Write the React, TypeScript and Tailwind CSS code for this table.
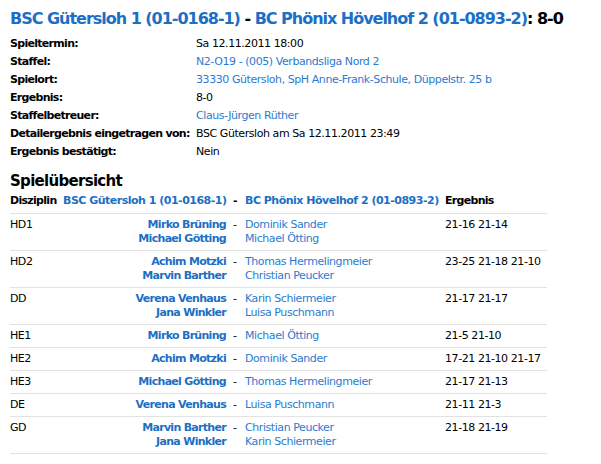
const info: [string, string, boolean][] = [
  ["Spieltermin:", "Sa 12.11.2011 18:00", false],
  ["Staffel:", "N2-O19 - (005) Verbandsliga Nord 2", true],
  ["Spielort:", "33330 Gütersloh, SpH Anne-Frank-Schule, Düppelstr. 25 b", true],
  ["Ergebnis:", "8-0", false],
  ["Staffelbetreuer:", "Claus-Jürgen Rüther", true],
  ["Detailergebnis eingetragen von:", "BSC Gütersloh am Sa 12.11.2011 23:49", false],
  ["Ergebnis bestätigt:", "Nein", false],
];

type Match = { disc: string; home: string[]; guest: string[]; result: string };

const matches: Match[] = [
  { disc: "HD1", home: ["Mirko Brüning", "Michael Götting"], guest: ["Dominik Sander", "Michael Ötting"], result: "21-16 21-14" },
  { disc: "HD2", home: ["Achim Motzki", "Marvin Barther"], guest: ["Thomas Hermelingmeier", "Christian Peucker"], result: "23-25 21-18 21-10" },
  { disc: "DD", home: ["Verena Venhaus", "Jana Winkler"], guest: ["Karin Schiermeier", "Luisa Puschmann"], result: "21-17 21-17" },
  { disc: "HE1", home: ["Mirko Brüning"], guest: ["Michael Ötting"], result: "21-5 21-10" },
  { disc: "HE2", home: ["Achim Motzki"], guest: ["Dominik Sander"], result: "17-21 21-10 21-17" },
  { disc: "HE3", home: ["Michael Götting"], guest: ["Thomas Hermelingmeier"], result: "21-17 21-13" },
  { disc: "DE", home: ["Verena Venhaus"], guest: ["Luisa Puschmann"], result: "21-11 21-3" },
  { disc: "GD", home: ["Marvin Barther", "Jana Winkler"], guest: ["Christian Peucker", "Karin Schiermeier"], result: "21-18 21-19" },
];

export default function App() {
  return (
    <div className="h-[464px] w-[601px] overflow-hidden bg-white pl-[10px] font-['DejaVu_Sans',sans-serif] text-[11px] leading-[14px] tracking-[-0.43px] whitespace-nowrap text-black">
      <h1 className="pt-[9px] text-[16px] leading-[20px] font-bold tracking-[-1.02px]">
        <span className="text-[#1c6fc4]">BSC Gütersloh 1 (01-0168-1)</span> -{" "}
        <span className="text-[#1c6fc4]">BC Phönix Hövelhof 2 (01-0893-2)</span>: 8-0
      </h1>

      <div className="mt-[6px]">
        {info.map(([label, value, link]) => (
          <div key={label} className="flex h-[18px] items-center">
            <span className="w-[186px] shrink-0 font-bold tracking-[-0.7px]">{label}</span>
            <span className={link ? "text-[#2a7bd1]" : ""}>{value}</span>
          </div>
        ))}
      </div>

      <h2 className="mt-[10px] text-[15px] leading-[20px] font-bold tracking-[-0.7px]">Spielübersicht</h2>

      <div className="mt-[3px] w-[537px]">
        <div className="flex border-b border-[#e2e2e2] pb-[5px] font-bold tracking-[-0.5px]">
          <div className="w-[53px] tracking-[-0.7px]">Disziplin</div>
          <div className="w-[170px] pr-[7px] text-right text-[#1c6fc4]">BSC Gütersloh 1 (01-0168-1)</div>
          <div className="w-[12px]">-</div>
          <div className="w-[200px] text-[#1c6fc4]">BC Phönix Hövelhof 2 (01-0893-2)</div>
          <div className="tracking-[-0.7px]">Ergebnis</div>
        </div>
        {matches.map((m) => (
          <div key={m.disc} className="flex border-b border-[#e2e2e2] py-[4px]">
            <div className="w-[53px]">{m.disc}</div>
            <div className="w-[170px] pr-[7px] text-right font-bold tracking-[-0.7px] text-[#1c6fc4]">
              {m.home.map((n) => (
                <div key={n}>{n}</div>
              ))}
            </div>
            <div className="w-[12px]">-</div>
            <div className="w-[200px] text-[#2a7bd1]">
              {m.guest.map((n) => (
                <div key={n}>{n}</div>
              ))}
            </div>
            <div>{m.result}</div>
          </div>
        ))}
      </div>
    </div>
  );
}
